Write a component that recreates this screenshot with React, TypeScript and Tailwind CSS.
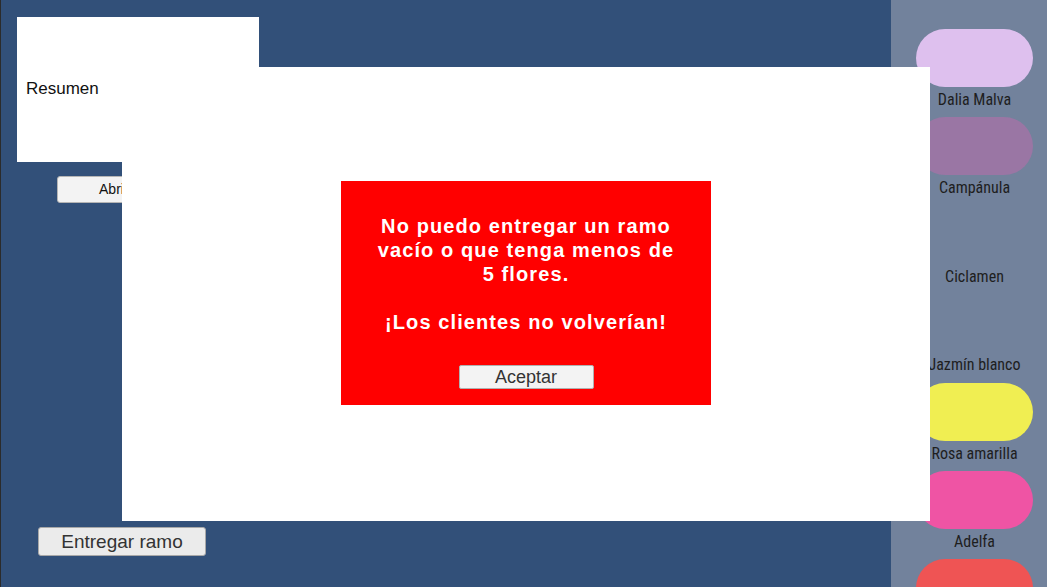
import React from "react";

type Flower = { name: string; color: string | null };

const flowers: Flower[] = [
  { name: "Dalia Malva", color: "bg-[#dec0ee]" },
  { name: "Campánula", color: "bg-[#9a76a4]" },
  { name: "Ciclamen", color: null },
  { name: "Jazmín blanco", color: null },
  { name: "Rosa amarilla", color: "bg-[#f0ee52]" },
  { name: "Adelfa", color: "bg-[#ef54a4]" },
  { name: "", color: "bg-[#ef5454]" },
];

function FlowerItem({ flower }: { flower: Flower }) {
  return (
    <div className="flex h-[88.4px] w-[117px] shrink-0 flex-col items-center">
      <div className={`h-[58px] w-[117px] shrink-0 rounded-full ${flower.color ?? ""}`} />
      {flower.name ? (
        <span
          className="mt-[1px] whitespace-nowrap text-[16px] leading-[24px] text-[#1e1e1e]"
          style={{ fontFamily: '"Liberation Sans Narrow", "Roboto Condensed", "Liberation Sans", sans-serif' }}
        >
          {flower.name}
        </span>
      ) : null}
    </div>
  );
}

export default function App() {
  return (
    <div className="relative flex h-[587px] w-[1047px] overflow-hidden font-['Liberation_Sans',Arial,sans-serif]">
      {/* main area */}
      <div className="flex w-[891px] shrink-0 flex-col border-l border-[#2b2b2b] bg-[#325079] pl-[16px] pt-[17px] pb-[31px]">
        <div className="flex h-[145px] w-[242px] items-center bg-white pb-[2px] pl-[9px] text-[17px] text-[#111]">
          Resumen
        </div>
        <button
          type="button"
          className="ml-[40px] mt-[14px] h-[27px] w-[172px] rounded-[3px] border border-[#b5b5b5] bg-[#f3f3f3] text-[14px] text-[#111]"
        >
          Abrir resumen
        </button>
        <button
          type="button"
          className="mt-auto ml-[21px] h-[29px] w-[168px] rounded-[3px] border border-[#a8a8a8] bg-[#ebebeb] text-[19px] text-[#333]"
        >
          Entregar ramo
        </button>
      </div>

      {/* sidebar */}
      <div className="flex flex-1 flex-col bg-[#72829c] pl-[25px] pt-[29px]">
        {flowers.map((f, i) => (
          <FlowerItem key={i} flower={f} />
        ))}
      </div>

      {/* modal */}
      <div className="absolute left-[122px] top-[67px] flex h-[454px] w-[808px] items-center justify-center bg-white pb-[2px]">
        <div className="flex h-[224px] w-[370px] flex-col items-center bg-[#ff0000] pt-[33px]">
          <p className="text-center text-[20px] font-bold leading-[24px] tracking-[1.1px] text-white">
            No puedo entregar un ramo
            <br />
            vacío o que tenga menos de
            <br />5 flores.
            <br />
            <br />
            ¡Los clientes no volverían!
          </p>
          <button
            type="button"
            className="mt-[31px] h-[24px] w-[135px] rounded-[2px] border border-[#b0b0b0] bg-[#f3f3f3] text-[18px] leading-[22px] text-[#333]"
          >
            Aceptar
          </button>
        </div>
      </div>
    </div>
  );
}
